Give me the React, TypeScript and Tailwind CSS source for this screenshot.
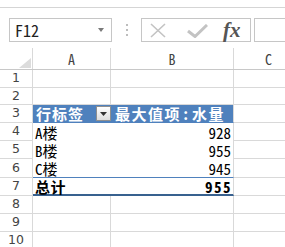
import React from "react";

const CELL = { fontFamily: '"Noto Sans Mono CJK SC", "Noto Sans CJK SC", monospace' };
const CJK = { fontFamily: '"Noto Sans CJK SC", sans-serif' };
const ROWNUM = { fontFamily: '"DejaVu Sans", sans-serif' };

type RowProps = {
  n: number;
  h: string;
  a?: React.ReactNode;
  b?: React.ReactNode;
  kind?: "plain" | "head" | "body" | "last" | "total";
};

function Row({ n, h, a, b, kind = "plain" }: RowProps) {
  let aCls = "border-r border-b border-[#d9d9d9]";
  let bCls = "border-r border-b border-[#d9d9d9]";
  if (kind === "head") {
    aCls = "bg-[#4F81BD] border-b border-[#4F81BD]";
    bCls = "bg-[#4F81BD] border-r border-r-[#d9d9d9] border-b border-b-[#4F81BD]";
  } else if (kind === "body") {
    aCls = "bg-white";
    bCls = "bg-white border-r border-[#d9d9d9]";
  } else if (kind === "last") {
    aCls = "bg-white border-b border-[#4F81BD]";
    bCls = "bg-white border-r border-r-[#d9d9d9] border-b border-b-[#4F81BD]";
  } else if (kind === "total") {
    aCls = "bg-white border-b-2 border-[#38618f]";
    bCls = "bg-white border-r border-r-[#d9d9d9] border-b-2 border-b-[#38618f]";
  }
  return (
    <div className={`flex shrink-0 ${h}`}>
      <div
        className="w-[33px] h-full shrink-0 border-r border-b border-[#d9d9d9] flex items-center justify-center text-[12.5px] text-[#444]"
        style={ROWNUM}
      >
        {n}
      </div>
      <div className={`w-[78px] h-full shrink-0 flex items-center ${aCls}`}>{a}</div>
      <div className={`w-[123px] h-full shrink-0 flex items-center ${bCls}`}>{b}</div>
      <div className="flex-1 h-full border-b border-[#d9d9d9]" />
    </div>
  );
}

function Label({ t, bold }: { t: string; bold?: boolean }) {
  return (
    <div
      className={`pl-[2px] text-[15px] leading-none text-black ${bold ? "font-bold tracking-[0.5px]" : ""}`}
      style={CELL}
    >
      {t}
    </div>
  );
}

function Num({ v, bold }: { v: string; bold?: boolean }) {
  return (
    <div
      className={`w-full text-right text-[15px] leading-none text-black ${bold ? "font-bold tracking-[1.5px] pr-[1px]" : "pr-[2px]"}`}
      style={CELL}
    >
      {v}
    </div>
  );
}

export default function App() {
  return (
    <div className="w-[285px] h-[247px] overflow-hidden bg-white flex flex-col">
      {/* ribbon bottom edge */}
      <div className="h-[7px] shrink-0 bg-white" />
      <div className="h-px shrink-0 bg-[#d5d5d5]" />
      {/* formula bar */}
      <div className="h-[40px] shrink-0 flex items-start pt-[10px]">
        <div className="ml-[9px] w-[103px] h-[24px] shrink-0 border border-[#c6c6c6] flex items-center justify-between pl-[5px] pr-[7px]">
          <span className="text-[16px] leading-none text-[#222]" style={CELL}>F12</span>
          <svg width="6" height="4" viewBox="0 0 6 4">
            <polygon points="0,0 6,0 3,4" fill="#7a7a7a" />
          </svg>
        </div>
        <div className="ml-[13px] w-[3px] h-[24px] shrink-0 flex flex-col items-center justify-center gap-[3px]">
          <div className="w-[2px] h-[2px] bg-[#bdbdbd]" />
          <div className="w-[2px] h-[2px] bg-[#bdbdbd]" />
          <div className="w-[2px] h-[2px] bg-[#bdbdbd]" />
        </div>
        <div className="ml-[13px] w-[110px] h-[24px] shrink-0 border border-[#c6c6c6] flex items-center">
          <svg className="ml-[8px]" width="16" height="15" viewBox="0 0 16 15">
            <path d="M1 1 L15 14 M15 1 L1 14" stroke="#c3c3c3" strokeWidth="1.6" fill="none" />
          </svg>
          <svg className="ml-[21px] mt-[2px]" width="21" height="14" viewBox="0 0 21 14">
            <path d="M1 7 L8 12.5 L20 1" stroke="#c3c3c3" strokeWidth="3" fill="none" />
          </svg>
          <span
            className="ml-[15px] text-[21px] italic font-semibold text-[#555] leading-none"
            style={{ fontFamily: '"Liberation Serif", serif' }}
          >
            fx
          </span>
        </div>
        <div className="ml-[3px] flex-1 h-[24px] border-l border-y border-[#c6c6c6]" />
      </div>
      {/* column headers */}
      <div className="flex h-[22px] shrink-0 border-b border-[#c8c8c8] text-[14px] text-[#444]" style={CELL}>
        <div className="w-[33px] h-full shrink-0 border-r border-[#d9d9d9] flex items-end justify-end pr-[1px] pb-[1px]">
          <svg width="12" height="10" viewBox="0 0 12 10">
            <polygon points="12,0 12,10 0,10" fill="#dcdcdc" />
          </svg>
        </div>
        <div className="w-[78px] h-full shrink-0 border-r border-[#d9d9d9] flex items-center justify-center pt-[2px]">A</div>
        <div className="w-[123px] h-full shrink-0 border-r border-[#d9d9d9] flex items-center justify-center pt-[2px]">B</div>
        <div className="flex-1 h-full flex items-center justify-center pt-[2px] pl-[18px]">C</div>
      </div>
      <Row n={1} h="h-[18px]" />
      <Row n={2} h="h-[17px]" />
      <Row
        n={3}
        h="h-[18px]"
        kind="head"
        a={
          <div className="w-full flex items-center justify-between pl-[3px]">
            <span className="text-[15px] font-bold text-white tracking-[1px] leading-none" style={CJK}>行标签</span>
            <div className="w-[15px] h-[15px] border border-[#8f8f8f] bg-gradient-to-b from-white to-[#dedede] flex items-center justify-center">
              <svg width="7" height="4" viewBox="0 0 7 4">
                <polygon points="0,0 7,0 3.5,4" fill="#333" />
              </svg>
            </div>
          </div>
        }
        b={
          <div className="pl-[4px] flex items-center text-[15px] font-bold text-white leading-none tracking-[1.5px]" style={CJK}>
            <span>最大值项</span>
            <span className="inline-block w-[11px] text-center">:</span>
            <span>水量</span>
          </div>
        }
      />
      <Row n={4} h="h-[18px]" kind="body" a={<Label t="A楼" />} b={<Num v="928" />} />
      <Row n={5} h="h-[18px]" kind="body" a={<Label t="B楼" />} b={<Num v="955" />} />
      <Row n={6} h="h-[19px]" kind="last" a={<Label t="C楼" />} b={<Num v="945" />} />
      <Row n={7} h="h-[18px]" kind="total" a={<Label t="总计" bold />} b={<Num v="955" bold />} />
      <Row n={8} h="h-[18px]" />
      <Row n={9} h="h-[18px]" />
      <Row n={10} h="h-[18px]" />
    </div>
  );
}
